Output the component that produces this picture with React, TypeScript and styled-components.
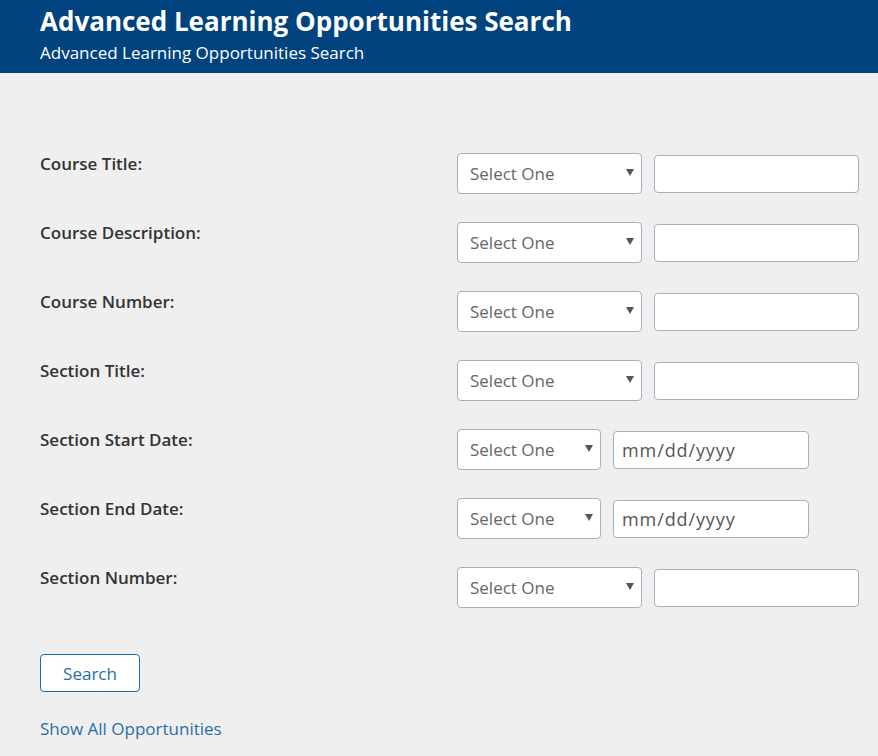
import React from "react";
import styled, { createGlobalStyle } from "styled-components";

const Global = createGlobalStyle`
  html, body { margin: 0; padding: 0; background: #efefef; }
  body { font-family: "Open Sans", "Noto Sans", Arial, sans-serif; }
  * { box-sizing: border-box; }
`;

const Header = styled.header`
  background: #00437f;
  height: 73px;
  padding: 4px 40px 0;
  color: #fff;
`;

const Title = styled.h1`
  margin: 0;
  font-size: 26px;
  font-weight: 700;
  line-height: 34px;
`;

const Subtitle = styled.div`
  margin-top: 3px;
  font-size: 17px;
  line-height: 24px;
`;

const Main = styled.main`
  padding: 80px 20px 0 40px;
`;

const Form = styled.div`
  display: flex;
  flex-direction: column;
  gap: 28px;
`;

const Row = styled.div`
  display: grid;
  grid-template-columns: 417px auto;
  align-items: start;
`;

const Label = styled.label`
  font-size: 17px;
  font-weight: 600;
  color: #333;
  line-height: 22px;
`;

const Controls = styled.div`
  display: flex;
  align-items: center;
  gap: 12px;
  height: 41px;
`;

const SelectWrap = styled.div<{ $w: number }>`
  position: relative;
  width: ${(p) => p.$w}px;
  height: 41px;
`;

const Select = styled.select`
  appearance: none;
  -webkit-appearance: none;
  width: 100%;
  height: 100%;
  border: 1px solid #a9aec0;
  border-radius: 4px;
  background: #fff;
  padding: 0 12px;
  font-family: inherit;
  font-size: 17px;
  color: #666;
`;

const Caret = styled.span`
  position: absolute;
  right: 8px;
  top: 16px;
  width: 0;
  height: 0;
  border-left: 4px solid transparent;
  border-right: 4px solid transparent;
  border-top: 7px solid #555;
  pointer-events: none;
`;

const TextInput = styled.input<{ $w: number }>`
  width: ${(p) => p.$w}px;
  height: 38px;
  border: 1px solid #a9aec0;
  border-radius: 4px;
  background: #fff;
  padding: 0 8px;
  font-family: inherit;
  font-size: 18px;
  color: #555;
  &::placeholder {
    color: #555;
    letter-spacing: 0.9px;
  }
`;

const SearchButton = styled.button`
  margin-top: 46px;
  width: 100px;
  height: 38px;
  border: 1px solid #1e6ead;
  border-radius: 4px;
  background: #fff;
  color: #1e6ead;
  font-family: inherit;
  font-size: 17px;
`;

const ShowAll = styled.a`
  display: block;
  margin-top: 25px;
  color: #2b6ea8;
  font-size: 17px;
  text-decoration: none;
`;

const rows: { label: string; date?: boolean }[] = [
  { label: "Course Title:" },
  { label: "Course Description:" },
  { label: "Course Number:" },
  { label: "Section Title:" },
  { label: "Section Start Date:", date: true },
  { label: "Section End Date:", date: true },
  { label: "Section Number:" },
];

export default function App() {
  return (
    <>
      <Global />
      <Header>
        <Title>Advanced Learning Opportunities Search</Title>
        <Subtitle>Advanced Learning Opportunities Search</Subtitle>
      </Header>
      <Main>
        <Form>
          {rows.map((r) => (
            <Row key={r.label}>
              <Label>{r.label}</Label>
              <Controls>
                <SelectWrap $w={r.date ? 144 : 185}>
                  <Select defaultValue="">
                    <option value="">Select One</option>
                  </Select>
                  <Caret />
                </SelectWrap>
                {r.date ? (
                  <TextInput $w={196} placeholder="mm/dd/yyyy" />
                ) : (
                  <TextInput $w={205} />
                )}
              </Controls>
            </Row>
          ))}
        </Form>
        <SearchButton>Search</SearchButton>
        <ShowAll href="#">Show All Opportunities</ShowAll>
      </Main>
    </>
  );
}
